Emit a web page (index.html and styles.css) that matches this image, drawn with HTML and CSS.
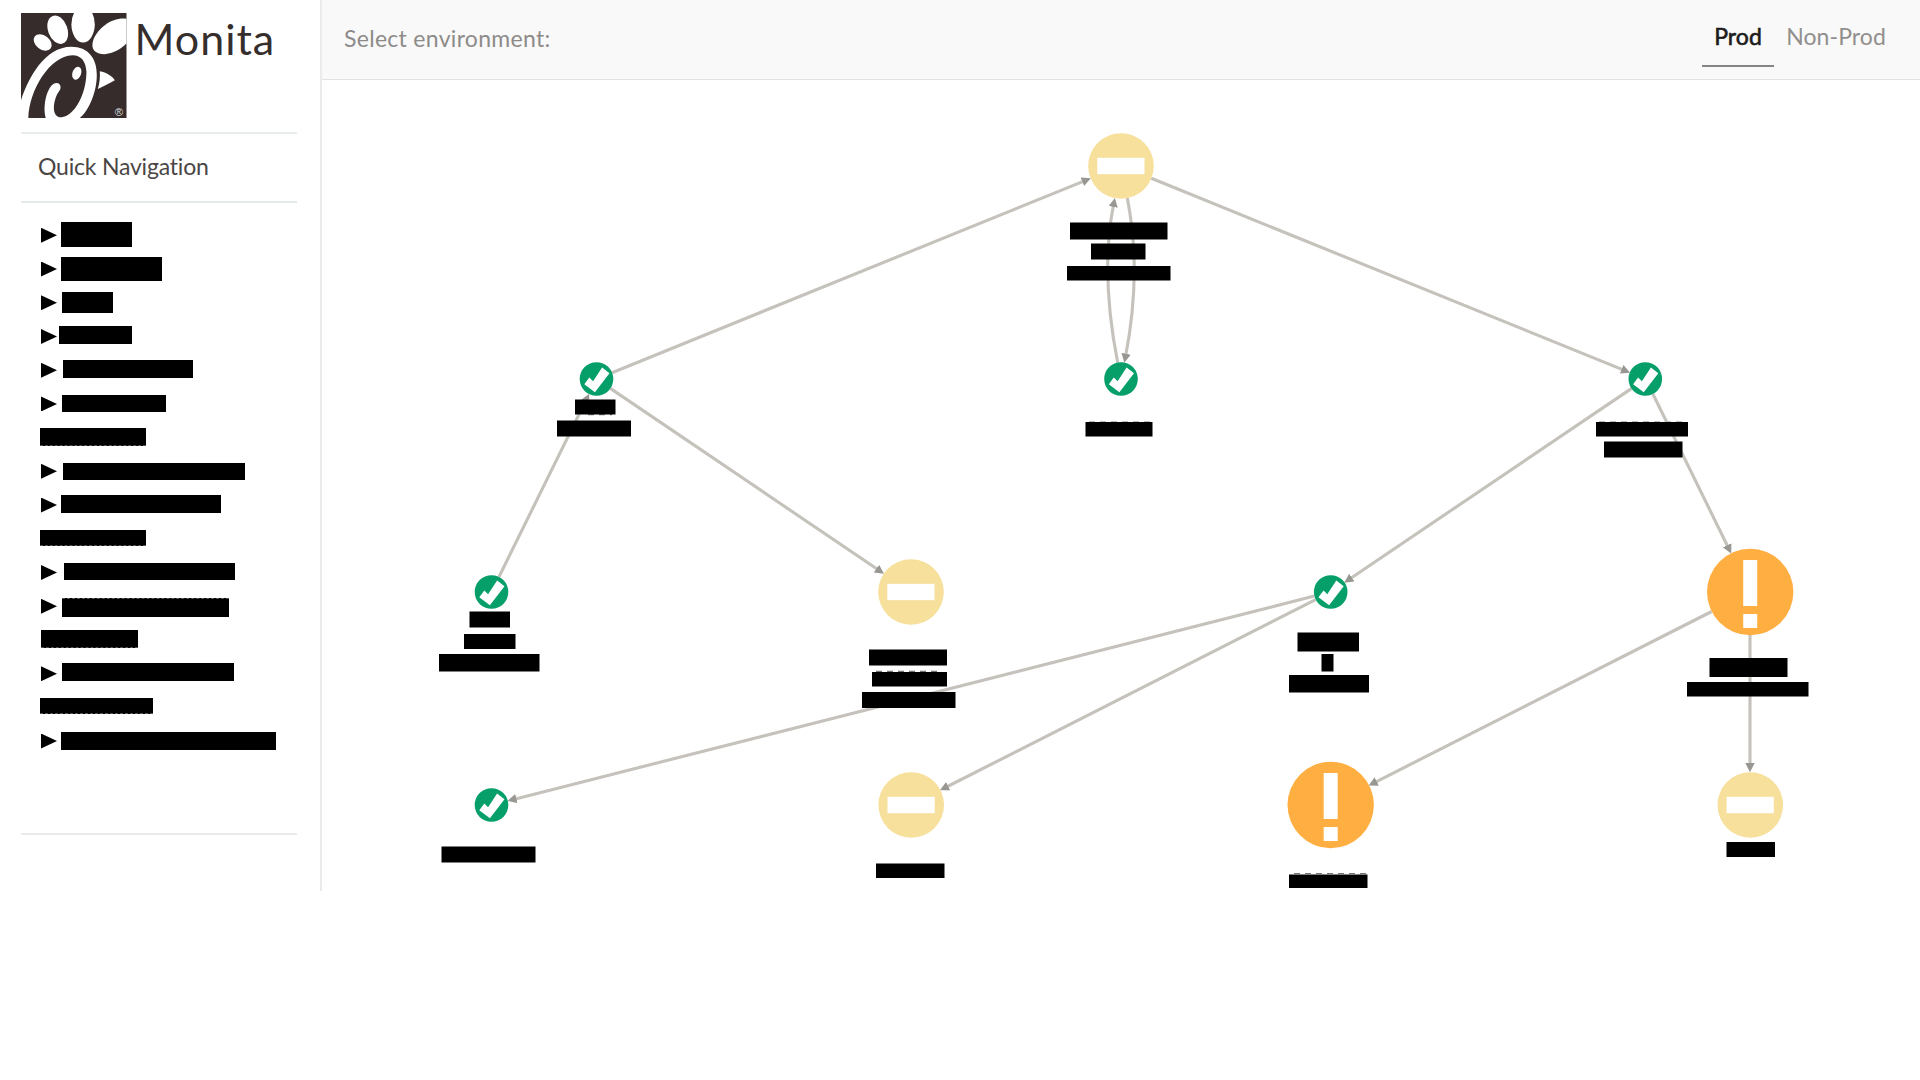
FILE: index.html
```
<!DOCTYPE html>
<html lang="en">
<head>
<meta charset="utf-8">
<title>Monita</title>
<link rel="stylesheet" href="styles.css">
</head>
<body>
<div class="app">
  <aside class="sidebar">
    <div class="brand">
      <svg class="logo" viewBox="64 39 316 314" preserveAspectRatio="none">
        <rect x="64" y="39" width="316" height="314" fill="#352c2b"/>
        <g fill="#fff">
          <ellipse cx="129" cy="127" rx="30" ry="21" transform="rotate(38 129 127)"/>
          <ellipse cx="174" cy="89" rx="29" ry="44" transform="rotate(-20 174 89)"/>
          <ellipse cx="250" cy="73" rx="35" ry="54"/>
          <path d="M380 56C340 50 297 80 281 118C271 147 285 162 315 162C345 158 365 145 380 130Z"/>
          <path d="M64 300C85 235 135 140 215 140C265 140 292 175 291 225C291 275 268 330 240 353L138 353C128 315 142 262 163 250C176 243 188 256 180 270C160 295 152 352 185 351C225 348 260 280 260 215C258 185 246 165 218 165C150 167 88 270 86 353L64 353Z"/>
          <ellipse cx="231" cy="219" rx="13" ry="20" transform="rotate(20 231 219)"/>
          <path d="M300 213C320 216 338 228 345 240C330 249 310 259 294 266C300 248 301 230 300 213Z"/>
        </g>
        <text class="reg" x="357" y="346" text-anchor="middle">®</text>
      </svg>
      <h1 class="name">Monita</h1>
    </div>
    <h2 class="nav-title">Quick Navigation</h2>
    <ul class="nav">
      <li><i class="tri"></i><b class="bar n0"></b></li>
      <li><i class="tri"></i><b class="bar n1"></b></li>
      <li><i class="tri"></i><b class="bar n2"></b></li>
      <li><i class="tri"></i><b class="bar n3"></b></li>
      <li><i class="tri"></i><b class="bar n4"></b></li>
      <li><i class="tri"></i><b class="bar n5"></b></li>
      <li><b class="bar n6 frayed"></b></li>
      <li><i class="tri"></i><b class="bar n7"></b></li>
      <li><i class="tri"></i><b class="bar n8"></b></li>
      <li><b class="bar n9 frayed"></b></li>
      <li><i class="tri"></i><b class="bar n10"></b></li>
      <li><i class="tri"></i><b class="bar n11 frayed-top"></b></li>
      <li><b class="bar n12 frayed"></b></li>
      <li><i class="tri"></i><b class="bar n13"></b></li>
      <li><b class="bar n14 frayed"></b></li>
      <li><i class="tri"></i><b class="bar n15"></b></li>
    </ul>
  </aside>
  <main class="main">
    <header class="topbar">
      <span class="label">Select environment:</span>
      <nav class="tabs">
        <a class="tab active">Prod</a>
        <a class="tab">Non-Prod</a>
      </nav>
    </header>
    <svg class="graph" viewBox="322 80 1598 811">
      <defs>
        <marker id="arrow" markerUnits="userSpaceOnUse" markerWidth="10" markerHeight="10" refX="3" refY="4.7" orient="auto"><path class="head" d="M0 0L9.2 4.7L0 9.4Z"/></marker>
        <g id="ok"><circle r="16.8" fill="#079f69"/><path fill="#fff" d="M-12.2 5.2L-7.2-1.4L-3.4 2.3L5.6-11.6L13-5.8L-1.6 13.2Z"/></g>
        <g id="idle"><circle r="32.8" fill="#f7e09b"/><rect x="-23.7" y="-8.2" width="47.2" height="16.4" fill="#fff"/></g>
        <g id="warn"><circle r="43.2" fill="#ffaf41"/><rect x="-7" y="-32" width="14" height="46" fill="#fff"/><rect x="-7" y="22" width="14" height="14" fill="#fff"/></g>
      </defs>
      <g class="edges">
        <path d="M612 372.7L1085.1 180.6"/>
        <path d="M1151.3 178.3L1624.4 370.4"/>
        <path d="M1127.3 198Q1142 272.5 1125.5 356.7"/>
        <path d="M1117.7 362.6Q1100 272.5 1113.7 204"/>
        <path d="M498.9 577L586.4 399.4"/>
        <path d="M610.3 388.4L878.9 570.3"/>
        <path d="M1631.7 388.4L1349.3 579.2"/>
        <path d="M1652.9 394L1728.5 548"/>
        <path d="M1314.3 596.1L513.5 799.4"/>
        <path d="M1315.6 599.6L945.5 787.5"/>
        <path d="M1711.7 611.5L1374.1 782.8"/>
        <path d="M1750 635L1750 766"/>
      </g>
      <use href="#idle" x="1121" y="166"/>
      <use href="#ok" x="596.5" y="379"/>
      <use href="#ok" x="1121" y="379"/>
      <use href="#ok" x="1645.3" y="379"/>
      <use href="#ok" x="491.5" y="592"/>
      <use href="#idle" x="911" y="592"/>
      <use href="#ok" x="1330.7" y="592"/>
      <use href="#warn" x="1750.2" y="592"/>
      <use href="#ok" x="491.5" y="805"/>
      <use href="#idle" x="911.2" y="805"/>
      <use href="#warn" x="1330.7" y="805"/>
      <use href="#idle" x="1750.3" y="805"/>
      <g class="traces">
        <path d="M588 414.7H612M876 671.3H942M1294 873.5H1366"/>
        <path class="faint" d="M1089 421.6H1152M1599 421.6H1683"/>
      </g>
      <g class="labels">
        <rect x="1070" y="222.5" width="97.5" height="17"/>
        <rect x="1091" y="243.5" width="54.5" height="16"/>
        <rect x="1067" y="266" width="103.5" height="14.5"/>
        <rect x="1085.5" y="422" width="67" height="14.5"/>
        <rect x="575" y="399.5" width="40.5" height="15"/>
        <rect x="557" y="420.5" width="74" height="16"/>
        <rect x="469.5" y="611.5" width="40.5" height="16"/>
        <rect x="464" y="634" width="51.5" height="15"/>
        <rect x="439" y="654" width="100.5" height="17.5"/>
        <rect x="869" y="649.5" width="78" height="16"/>
        <rect x="872" y="672" width="75" height="14.5"/>
        <rect x="862" y="692" width="93.5" height="16"/>
        <rect x="876" y="863.5" width="68.5" height="14.5"/>
        <rect x="1297.5" y="632.5" width="61.5" height="19"/>
        <rect x="1321.5" y="654" width="12" height="17.5"/>
        <rect x="1289" y="675" width="80" height="17.5"/>
        <rect x="1289" y="874.5" width="78.5" height="13.5"/>
        <rect x="1596" y="422" width="92" height="14.5"/>
        <rect x="1604" y="441.5" width="78.5" height="16"/>
        <rect x="1709.5" y="658" width="78" height="19"/>
        <rect x="1687" y="682" width="121.5" height="14.5"/>
        <rect x="1726.5" y="842" width="48.5" height="15"/>
        <rect x="441.5" y="846.5" width="94" height="16"/>
      </g>
    </svg>
  </main>
</div>
</body>
</html>
```
FILE: styles.css
```
* { box-sizing: border-box; }
body {
  margin: 0;
  background: #fff;
  font-family: Lato, "Open Sans", sans-serif;
}
.app { display: flex; height: 891px; }
.sidebar {
  width: 322px;
  padding: 13px 23px 0 21px;
  border-right: 2px solid #ebebed;
}
.brand {
  display: flex;
  height: 121px;
  border-bottom: 2px solid #e8ecec;
}
.logo { width: 105.5px; height: 105px; }
.reg { font: 34px "Liberation Sans", sans-serif; fill: #ddd; }
.name {
  margin: 0 0 0 8px;
  font-size: 43px;
  line-height: 52px;
  font-weight: 400;
  letter-spacing: 1px;
  color: #352e2d;
}
.nav-title {
  margin: 0;
  height: 69px;
  padding-left: 17px;
  border-bottom: 2px solid #e4e9e9;
  font-size: 23px;
  line-height: 65px;
  font-weight: 400;
  letter-spacing: -.2px;
  color: #4b4645;
}
.nav {
  list-style: none;
  margin: 0;
  height: 632px;
  padding: 15.5px 0 0 18px;
  border-bottom: 2px solid #ebebeb;
}
.nav li {
  display: flex;
  align-items: flex-start;
  height: 33.72px;
}
.tri {
  width: 16px;
  height: 15px;
  margin: 9.3px 0 0 2px;
  background: #000;
  clip-path: polygon(0 0, 100% 50%, 0 100%);
}
.bar { background: #000; }
.frayed { border-bottom: 1px dashed #555; }
.frayed-top { border-top: 1px dashed #555; }
.n0 { margin: 3.5px 0 0 3.5px; width: 71.5px; height: 25px; }
.n1 { margin: 4.8px 0 0 3.5px; width: 101px; height: 24px; }
.n2 { margin: 6.1px 0 0 5px; width: 50.5px; height: 21px; }
.n3 { margin: 6.3px 0 0 2px; width: 73px; height: 18px; }
.n4 { margin: 6.6px 0 0 6px; width: 129.5px; height: 18px; }
.n5 { margin: 7.9px 0 0 5px; width: 104px; height: 17px; }
.n6 { margin: 6.7px 0 0 1px; width: 106px; height: 18px; }
.n7 { margin: 8px 0 0 6px; width: 182px; height: 17px; }
.n8 { margin: 6.7px 0 0 3.5px; width: 160px; height: 18px; }
.n9 { margin: 8px 0 0 .5px; width: 106.5px; height: 16px; }
.n10 { margin: 7.8px 0 0 6.5px; width: 171.5px; height: 17px; }
.n11 { margin: 8.6px 0 0 5px; width: 167px; height: 19px; }
.n12 { margin: 6.4px 0 0 1.5px; width: 97px; height: 18px; }
.n13 { margin: 6.6px 0 0 5px; width: 171.5px; height: 18px; }
.n14 { margin: 7.9px 0 0 .5px; width: 113.5px; height: 16px; }
.n15 { margin: 7.7px 0 0 3.5px; width: 215.5px; height: 18px; }
.main { flex: 1; display: flex; flex-direction: column; }
.topbar {
  display: flex;
  justify-content: space-between;
  height: 80px;
  padding: 0 24px 0 22px;
  background: #f9f9f9;
  border-bottom: 1px solid #e2e2e2;
}
.label {
  font-size: 23px;
  line-height: 76px;
  letter-spacing: .3px;
  color: #8d8b89;
}
.tabs { display: flex; height: 67px; }
.tab {
  padding: 0 10px 0 12px;
  font-size: 23px;
  line-height: 73px;
  letter-spacing: .1px;
  color: #918f8d;
}
.tab.active {
  width: 72px;
  color: #1e1c1b;
  border-bottom: 2px solid #858585;
  -webkit-text-stroke: .6px #1e1c1b;
}
.graph { display: block; width: 1598px; height: 811px; }
.edges path {
  fill: none;
  stroke: #c5c2bc;
  stroke-width: 3.1;
  marker-end: url(#arrow);
}
.head { fill: #999791; stroke: none; }
.traces path { stroke: #777; stroke-width: 1.2; stroke-dasharray: 6 5; }
.traces .faint { stroke: #bbb; }
```
